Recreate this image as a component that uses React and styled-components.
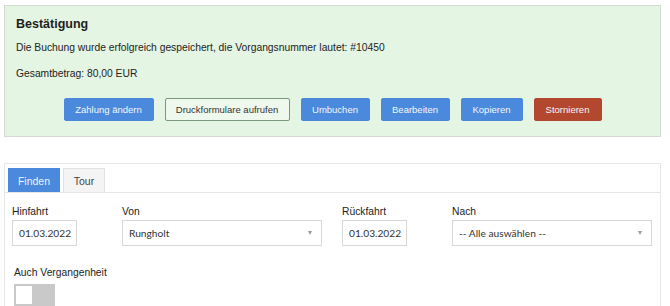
import React, { useState } from "react";
import styled, { createGlobalStyle } from "styled-components";

const Global = createGlobalStyle`
  html, body { margin: 0; padding: 0; background: #fff; }
  body { font-family: "Liberation Sans", Arial, sans-serif; color: #222; }
  * { box-sizing: border-box; }
`;

const Page = styled.div`
  width: 670px;
  padding: 5px 9px 0 4px;
`;

const Alert = styled.section`
  background: #e5f5e3;
  border: 1px solid #d3dbd2;
  padding: 10px 11px 15px 11px;
`;

const Title = styled.h3`
  margin: 0;
  font-size: 12.5px;
  line-height: 16px;
  font-weight: bold;
  color: #1e1e1e;
`;

const Line = styled.p`
  margin: ${(p) => p.$mt}px 0 0;
  font-size: 10.3px;
  line-height: 15px;
  color: #222;
`;

const Actions = styled.div`
  display: flex;
  justify-content: center;
  gap: 11px;
  margin-top: 17.5px;
`;

const Btn = styled.button`
  height: 23px;
  width: ${(p) => p.$w}px;
  padding: 0;
  white-space: nowrap;
  font-family: "Liberation Sans", Arial, sans-serif;
  font-size: 9.5px;
  border-radius: 2px;
  cursor: pointer;
  border: 1px solid
    ${(p) => (p.$kind === "danger" ? "#b0462f" : p.$kind === "outline" ? "#7a977a" : "#4a89dc")};
  background: ${(p) => (p.$kind === "danger" ? "#b4482f" : p.$kind === "outline" ? "#eef8ec" : "#4a89dc")};
  color: ${(p) => (p.$kind === "outline" ? "#333" : "#f4f7fb")};
`;

const Panel = styled.section`
  margin-top: 26px;
  border: 1px solid #e6e6e6;
  border-bottom: none;
  height: 143px;
`;

const TabBar = styled.div`
  display: flex;
  gap: 3px;
  padding: 4px 3px 0;
  border-bottom: 1px solid #e4e4e4;
`;

const Tab = styled.button`
  height: 24px;
  width: ${(p) => p.$w}px;
  padding: 0;
  font-family: "Liberation Sans", Arial, sans-serif;
  font-size: 10.5px;
  border: 1px solid ${(p) => (p.$active ? "#4a89dc" : "#e2e2e2")};
  border-bottom: none;
  background: ${(p) => (p.$active ? "#4a89dc" : "#f4f4f4")};
  color: ${(p) => (p.$active ? "#eef4fc" : "#444")};
  cursor: pointer;
`;

const Form = styled.div`
  padding: 12px 7px 0;
`;

const Row = styled.div`
  display: grid;
  grid-template-columns: 110px 220px 110px 200px;
  align-items: start;
`;

const Field = styled.div`
  display: flex;
  flex-direction: column;
`;

const Label = styled.label`
  font-size: 10.3px;
  line-height: 14px;
  color: #222;
  margin-bottom: 1px;
`;

const Input = styled.div`
  width: ${(p) => p.$w}px;
  height: 26px;
  border: 1px solid #d8d8d8;
  background: #fff;
  display: flex;
  align-items: center;
  justify-content: space-between;
  padding: 0 9px 0 6px;
  font-family: Lato, "Open Sans", sans-serif;
  font-size: 10.2px;
  color: #333;
`;

const Caret = styled.span`
  width: 0;
  height: 0;
  border-left: 2.5px solid transparent;
  border-right: 2.5px solid transparent;
  border-top: 4px solid #999;
`;

const ToggleLabel = styled(Label)`
  display: block;
  margin: 20px 0 4px 2px;
`;

const Toggle = styled.div`
  margin-left: 2px;
  width: 41px;
  height: 22px;
  background: #c9c9c9;
  padding: 2px;
  display: flex;
  justify-content: ${(p) => (p.$on ? "flex-end" : "flex-start")};
  cursor: pointer;
`;

const Knob = styled.span`
  width: 16px;
  height: 18px;
  background: #fff;
`;

export default function App() {
  const [tab, setTab] = useState("finden");
  const [on, setOn] = useState(false);
  return (
    <Page>
      <Global />
      <Alert>
        <Title>Bestätigung</Title>
        <Line $mt={7.5}>
          Die Buchung wurde erfolgreich gespeichert, die Vorgangsnummer lautet: #10450
        </Line>
        <Line $mt={11}>Gesamtbetrag: 80,00 EUR</Line>
        <Actions>
          <Btn $w={90}>Zahlung ändern</Btn>
          <Btn $kind="outline" $w={125}>Druckformulare aufrufen</Btn>
          <Btn $w={69}>Umbuchen</Btn>
          <Btn $w={69}>Bearbeiten</Btn>
          <Btn $w={62}>Kopieren</Btn>
          <Btn $kind="danger" $w={68}>Stornieren</Btn>
        </Actions>
      </Alert>
      <Panel>
        <TabBar>
          <Tab $active={tab === "finden"} $w={52} onClick={() => setTab("finden")}>Finden</Tab>
          <Tab $active={tab === "tour"} $w={42} onClick={() => setTab("tour")}>Tour</Tab>
        </TabBar>
        <Form>
          <Row>
            <Field>
              <Label>Hinfahrt</Label>
              <Input $w={65}>01.03.2022</Input>
            </Field>
            <Field>
              <Label>Von</Label>
              <Input $w={200}>
                Rungholt
                <Caret />
              </Input>
            </Field>
            <Field>
              <Label>Rückfahrt</Label>
              <Input $w={65}>01.03.2022</Input>
            </Field>
            <Field>
              <Label>Nach</Label>
              <Input $w={200}>
                -- Alle auswählen --
                <Caret />
              </Input>
            </Field>
          </Row>
          <ToggleLabel>Auch Vergangenheit</ToggleLabel>
          <Toggle $on={on} onClick={() => setOn(!on)}>
            <Knob />
          </Toggle>
        </Form>
      </Panel>
    </Page>
  );
}
